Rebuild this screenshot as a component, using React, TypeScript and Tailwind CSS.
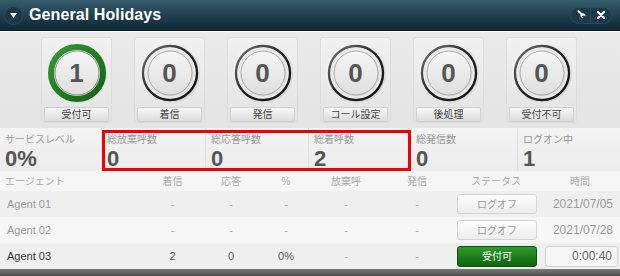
import React from 'react';

type Tile = { label: string; value: number; active?: boolean };

const tiles: Tile[] = [
  { label: '受付可', value: 1, active: true },
  { label: '着信', value: 0 },
  { label: '発信', value: 0 },
  { label: 'コール設定', value: 0 },
  { label: '後処理', value: 0 },
  { label: '受付不可', value: 0 },
];

const stats = [
  { label: 'サービスレベル', value: '0%' },
  { label: '総放棄呼数', value: '0' },
  { label: '総応答呼数', value: '0' },
  { label: '総着呼数', value: '2' },
  { label: '総発信数', value: '0' },
  { label: 'ログオン中', value: '1' },
];

const agents = [
  { name: 'Agent 01', inbound: '-', answer: '-', pct: '-', abandon: '-', outbound: '-', status: 'off', time: '2021/07/05', bg: 'bg-[#efefef]' },
  { name: 'Agent 02', inbound: '-', answer: '-', pct: '-', abandon: '-', outbound: '-', status: 'off', time: '2021/07/28', bg: 'bg-[#f7f7f7]' },
  { name: 'Agent 03', inbound: '2', answer: '0', pct: '0%', abandon: '-', outbound: '-', status: 'on', time: '0:00:40', bg: 'bg-[#efefef]' },
];

function Gauge({ value, active }: { value: number; active?: boolean }) {
  const id = active ? 'g-on' : 'g-off';
  return (
    <div className="relative w-[62px] h-[62px]">
      <svg width="62" height="62" viewBox="0 0 62 62" className="absolute inset-0">
        <defs>
          <linearGradient id={`${id}-outer`} x1="0" y1="0" x2="1" y2="1">
            <stop offset="0" stopColor="#fbfbfb" />
            <stop offset="1" stopColor="#cfcfcf" />
          </linearGradient>
          <linearGradient id={`${id}-ring`} x1="0" y1="0" x2="1" y2="1">
            <stop offset="0" stopColor={active ? '#3a9a3a' : '#777'} />
            <stop offset="0.5" stopColor={active ? '#1f801f' : '#222'} />
            <stop offset="1" stopColor={active ? '#166016' : '#111'} />
          </linearGradient>
          <linearGradient id={`${id}-inner`} x1="0" y1="0" x2="0" y2="1">
            <stop offset="0" stopColor="#f6f6f6" />
            <stop offset="1" stopColor="#dedede" />
          </linearGradient>
        </defs>
        <circle cx="31" cy="31" r="30" fill={`url(#${id}-outer)`} />
        {active ? (
          <circle cx="31" cy="31" r="26" fill="none" stroke={`url(#${id}-ring)`} strokeWidth="6" />
        ) : (
          <>
            <circle cx="31" cy="31" r="27" fill="none" stroke={`url(#${id}-ring)`} strokeWidth="2.4" />
            <circle cx="31" cy="31" r="24.5" fill="none" stroke="#e9e9e9" strokeWidth="2" />
          </>
        )}
        <circle cx="31" cy="31" r="22" fill={`url(#${id}-inner)`} stroke={active ? '#8a8a8a' : '#a8a8a8'} strokeWidth="1" />
      </svg>
      <div className="absolute inset-0 flex items-center justify-center text-[26px] font-bold text-[#555] leading-none">
        {value}
      </div>
    </div>
  );
}

export default function App() {
  return (
    <div className="w-[620px] h-[276px] overflow-hidden bg-[#f3f3f3] font-['Liberation_Sans','Noto_Sans_CJK_JP',sans-serif]">
      {/* header */}
      <div className="h-[31px] flex items-center justify-between bg-gradient-to-b from-[#375b6d] to-[#0e2836] border-b border-[#0a1e29]">
        <div className="flex items-center">
          <div className="ml-[4px] w-[19px] h-[19px] rounded-full bg-[#1c3848] border border-[#2d4a5a] flex items-center justify-center">
            <svg width="7" height="5" viewBox="0 0 7 5"><path d="M0 0h7L3.5 5z" fill="#ffffff" /></svg>
          </div>
          <span className="ml-[6px] text-[16px] font-bold text-white tracking-[0.1px]">General Holidays</span>
        </div>
        <div className="mr-[8px] flex items-center h-[17px] rounded-full bg-[#1d3a4a] border border-[#2e4b5b]">
          <div className="w-[20px] h-full flex items-center justify-center border-r border-[#2e4b5b]">
            <svg width="10" height="10" viewBox="0 0 10 10">
              <path d="M6.2 0.6a2.6 2.6 0 0 0-2.9 3.4L0.4 6.9a1 1 0 0 0 1.4 1.4L4.7 5.4a2.6 2.6 0 0 0 3.4-2.9L6.8 3.8 5.7 3.5 5.4 2.4z" fill="#ffffff" transform="rotate(90 5 5)" />
            </svg>
          </div>
          <div className="w-[20px] h-full flex items-center justify-center">
            <svg width="8" height="8" viewBox="0 0 8 8">
              <path d="M1 1l6 6M7 1L1 7" stroke="#ffffff" strokeWidth="2.2" strokeLinecap="round" />
            </svg>
          </div>
        </div>
      </div>

      {/* gauges */}
      <div className="h-[97px] bg-gradient-to-b from-[#eaeaea] to-[#e4e4e4] border-t border-[#f8f8f8] flex items-start pl-[41px] gap-[22px] pt-[5px]">
        {tiles.map((t) => (
          <div key={t.label} className="w-[71px] h-[86px] rounded-[3px] bg-gradient-to-b from-[#f1f1f1] to-[#e3e3e3] border border-[#dcdcdc] flex flex-col items-center pt-[4px]">
            <Gauge value={t.value} active={t.active} />
            <div className="mt-[4px] w-[65px] h-[15px] rounded-[2px] bg-gradient-to-b from-[#f7f7f7] to-[#dcdcdc] border border-[#cfcfcf] flex items-center justify-center text-[10px] text-[#444] leading-none">
              {t.label}
            </div>
          </div>
        ))}
      </div>

      {/* stats */}
      <div className="relative h-[43px] grid grid-cols-[102px_104px_103px_102px_107px_102px] bg-[#eeeeee]">
        {stats.map((s, i) => (
          <div key={s.label} className={`h-full pl-[5px] pt-[5px] bg-gradient-to-b from-[#f3f3f3] to-[#ececec] ${i === 5 ? '' : 'border-r border-[#e0e0e0]'}`}>
            <div className="text-[10px] leading-[14px] text-[#999]">{s.label}</div>
            <div className="text-[22px] leading-[22px] font-bold text-[#555] mt-[1px]">{s.value}</div>
          </div>
        ))}
        {/* highlight annotation */}
        <div className="absolute left-[102px] top-[2px] w-[309px] h-[41px] border-[3px] border-[#ee0000] pointer-events-none" />
      </div>

      {/* table header */}
      <div className="h-[20px] grid grid-cols-[145px_55px_62px_48px_72px_70px_88px_80px] items-center bg-[#f5f5f5] text-[10px] text-[#aaa]">
        <div className="pl-[5px]">エージェント</div>
        <div className="text-center">着信</div>
        <div className="text-center">応答</div>
        <div className="text-center">%</div>
        <div className="text-center">放棄呼</div>
        <div className="text-center">発信</div>
        <div className="text-center">ステータス</div>
        <div className="text-center">時間</div>
      </div>

      {/* rows */}
      {agents.map((a) => {
        const on = a.status === 'on';
        const tone = on ? 'text-[#555]' : 'text-[#aaa]';
        return (
          <div key={a.name} className={`h-[26px] grid grid-cols-[145px_55px_62px_48px_72px_70px_88px_80px] items-center text-[11px] ${a.bg}`}>
            <div className={`pl-[7px] ${on ? 'text-[#333]' : 'text-[#999]'}`}>{a.name}</div>
            <div className={`text-center ${tone}`}>{a.inbound}</div>
            <div className={`text-center ${tone}`}>{a.answer}</div>
            <div className={`text-center ${tone}`}>{a.pct}</div>
            <div className="text-center text-[#aaa]">{a.abandon}</div>
            <div className="text-center text-[#aaa]">{a.outbound}</div>
            <div className="flex justify-end pr-[3px]">
              {on ? (
                <div className="w-[80px] h-[21px] rounded-[3px] bg-gradient-to-b from-[#2f9a2f] to-[#0d640d] border border-[#0b540b] flex items-center justify-center text-[10px] text-white">
                  受付可
                </div>
              ) : (
                <div className="w-[80px] h-[20px] rounded-[3px] bg-gradient-to-b from-[#ffffff] to-[#ececec] border border-[#d4d4d4] flex items-center justify-center text-[10px] text-[#999]">
                  ログオフ
                </div>
              )}
            </div>
            <div className="flex justify-end pr-[2px]">
              {on ? (
                <div className="w-[73px] h-[21px] rounded-[3px] bg-[#f6f6f6] border border-[#d0d0d0] flex items-center justify-end pr-[5px] text-[12px] text-[#666]">
                  {a.time}
                </div>
              ) : (
                <div className="pr-[5px] text-[12px] text-[#999]">{a.time}</div>
              )}
            </div>
          </div>
        );
      })}

      {/* bottom bar */}
      <div className="h-[7px] bg-gradient-to-b from-[#7a7a7a] to-[#4a4a4a]" />
    </div>
  );
}
